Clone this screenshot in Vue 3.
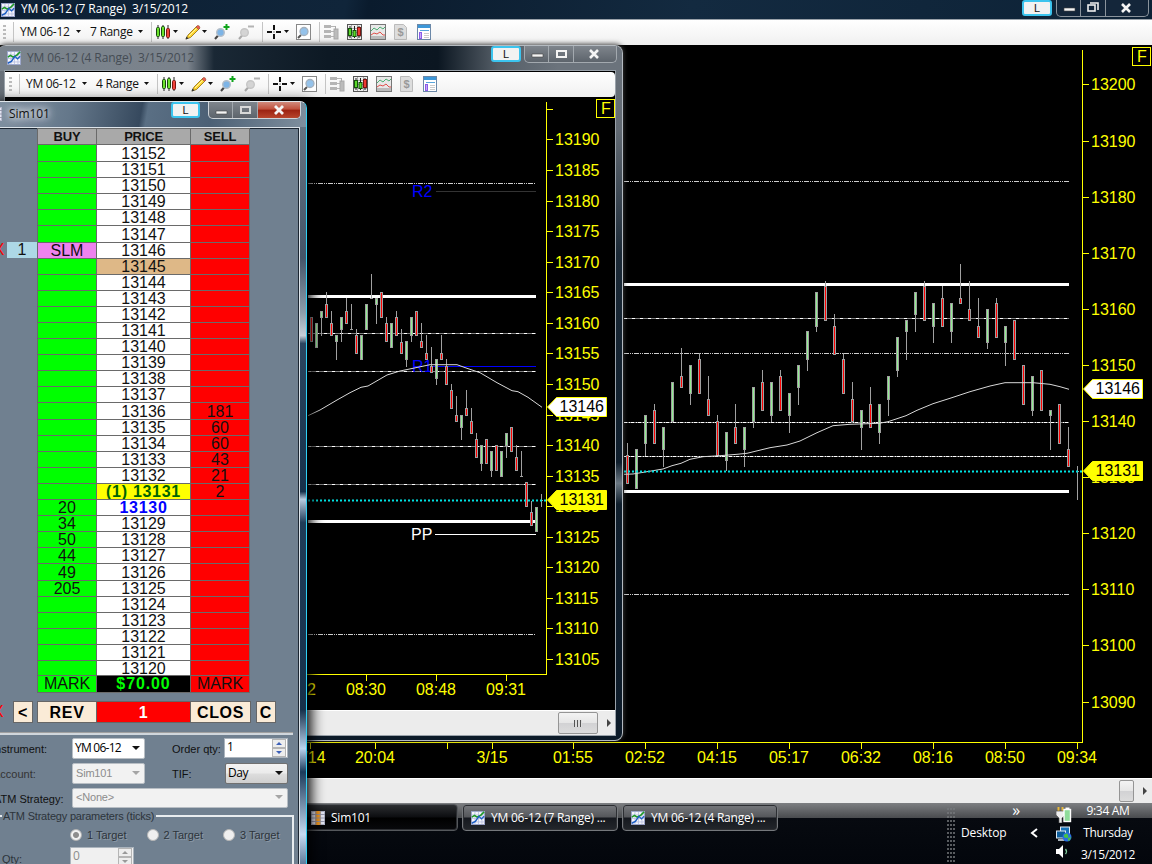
<script setup>
import { reactive } from 'vue';

const tools = ['candles', 'pencil', 'zoomin', 'zoomout', 'cross', 'page', 'trader', 'boxcandles', 'lines', 'dollar', 'panel']
const dropTools = ['candles', 'pencil', 'cross']
const sepBefore = ['candles', 'cross', 'trader']

// bar: [kind, high, body top, body bottom, low]
const bars7 = [
  ['r', 443, 455, 484, 484], ['g', 449, 449, 489, 489], ['g', 415, 415, 444, 456], ['r', 404, 410, 444, 444],
  ['g', 427, 427, 450, 467], ['g', 382, 382, 422, 422], ['r', 348, 376, 388, 388], ['g', 365, 365, 394, 405],
  ['r', 353, 359, 394, 394], ['r', 376, 399, 416, 416], ['r', 415, 421, 456, 456], ['g', 432, 432, 461, 471],
  ['r', 404, 427, 444, 444], ['g', 427, 427, 450, 467], ['g', 387, 387, 422, 428], ['r', 370, 382, 411, 411],
  ['g', 382, 382, 416, 422], ['r', 370, 376, 411, 411], ['g', 393, 393, 416, 433], ['g', 365, 365, 388, 405],
  ['g', 331, 331, 360, 371], ['g', 292, 292, 327, 332], ['r', 281, 286, 321, 321], ['r', 314, 326, 355, 355],
  ['r', 353, 359, 394, 394], ['r', 382, 399, 422, 422], ['g', 410, 410, 428, 450], ['r', 387, 404, 428, 428],
  ['g', 404, 404, 433, 444], ['g', 376, 376, 400, 416], ['g', 337, 337, 371, 377], ['g', 320, 320, 332, 360],
  ['g', 292, 292, 315, 332], ['r', 281, 286, 321, 321], ['g', 303, 303, 327, 343], ['r', 286, 298, 327, 327],
  ['g', 303, 303, 332, 343], ['r', 264, 298, 304, 304], ['r', 281, 309, 321, 321], ['r', 298, 326, 338, 338],
  ['g', 309, 309, 343, 349], ['r', 298, 303, 338, 338], ['g', 326, 326, 343, 366], ['r', 320, 320, 360, 360],
  ['r', 365, 365, 405, 405], ['g', 376, 376, 411, 416], ['r', 370, 370, 411, 411], ['g', 410, 410, 416, 450],
  ['r', 404, 404, 444, 444], ['r', 427, 449, 467, 467], ['d', 466, 471, 472, 500]
]

const bars4 = [
  ['r', 317, 317, 342, 342], ['g', 323, 323, 348, 348], ['g', 311, 311, 318, 336], ['r', 292, 304, 318, 318],
  ['r', 311, 323, 336, 336], ['g', 335, 335, 342, 360], ['g', 317, 317, 330, 342], ['r', 298, 311, 324, 324],
  ['d', 304, 329, 330, 330], ['r', 329, 335, 354, 354], ['g', 335, 335, 360, 360], ['g', 304, 304, 330, 330],
  ['d', 274, 298, 299, 299], ['g', 298, 298, 305, 324], ['r', 292, 292, 318, 318], ['r', 317, 323, 342, 342],
  ['g', 323, 323, 348, 348], ['r', 311, 317, 336, 336], ['r', 329, 342, 354, 354], ['g', 341, 341, 360, 367],
  ['g', 317, 317, 336, 342], ['r', 311, 311, 336, 336], ['r', 323, 341, 348, 348], ['r', 335, 353, 360, 360],
  ['r', 347, 366, 373, 373], ['g', 359, 359, 379, 385], ['r', 335, 353, 360, 360], ['r', 359, 366, 385, 385],
  ['r', 384, 390, 409, 409], ['r', 396, 415, 422, 422], ['g', 415, 415, 428, 440], ['r', 390, 408, 416, 416],
  ['r', 408, 421, 434, 434], ['r', 433, 439, 458, 458], ['g', 445, 445, 464, 471], ['r', 439, 439, 464, 464],
  ['g', 451, 451, 471, 477], ['r', 445, 445, 471, 471], ['g', 451, 451, 477, 477], ['g', 433, 433, 446, 458],
  ['r', 427, 427, 452, 452], ['r', 445, 457, 471, 471], ['d', 451, 476, 477, 477], ['r', 482, 482, 507, 507],
  ['r', 501, 512, 526, 526], ['g', 507, 507, 532, 532], ['d', 494, 500, 501, 507]
]

const charts = reactive([
  {
    id: 'main',
    title: 'YM 06-12 (7 Range)\u00a0 3/15/2012',
    range: '7 Range',
    viewBox: '0 45 1152 733',
    width: 1152,
    height: 733,
    left: 624,
    right: 1069,
    axisX: 1082,
    axisTop: 50,
    axisY: 742,
    labelX: 1091,
    flag: { x: 1132, y: 47 },
    prices: buildPrices(13200, 10, 12, 84.9, 5.61),
    times: [
      { x: 310, label: '3/14' }, { x: 375, label: '20:04' }, { x: 447, label: '' }, { x: 492, label: '3/15' },
      { x: 573, label: '01:55' }, { x: 645, label: '02:52' }, { x: 717, label: '04:15' }, { x: 789, label: '05:17' },
      { x: 861, label: '06:32' }, { x: 933, label: '08:16' }, { x: 1005, label: '08:50' }, { x: 1077, label: '09:34' }
    ],
    timeY: 763,
    levels: [
      { y: 181, kind: 'dots' }, { y: 318, kind: 'dash' }, { y: 353, kind: 'dots' },
      { y: 422, kind: 'mix' }, { y: 456, kind: 'mix' }, { y: 594, kind: 'dots' }
    ],
    bands: [283, 490],
    last: 471,
    average: '624,474.3 633,474 647,471.7 663,469 672,465.7 681,463.3 690,459.3 703,456.7 720,455.7 737,454.3 747,453.3 770,447.7 787,445 800,441 817,432.7 833,425.7 850,424.3 879,423.3 888,421.7 906,415.7 917,410.3 933,403.7 950,398.3 970,391.7 990,386 1005,382.7 1033,382.7 1050,384.3 1060,386.7 1069,389.3',
    bars: buildBars(bars7, 626, 9),
    tags: [{ y: 389, value: 13146, kind: 'white' }, { y: 471, value: 13131, kind: 'yellow' }]
  },
  {
    id: 'second',
    title: 'YM 06-12 (4 Range)\u00a0 3/15/2012',
    range: '4 Range',
    viewBox: '5 97 611 613',
    width: 611,
    height: 613,
    left: 308,
    right: 536,
    axisX: 546,
    axisTop: 102,
    axisY: 674,
    labelX: 555,
    flag: { x: 596, y: 99 },
    prices: buildPrices(13195, 5, 19, 109.3, 6.114),
    times: [
      { x: 296, label: '08:12' }, { x: 366, label: '08:30' }, { x: 436, label: '08:48' }, { x: 506, label: '09:31' }
    ],
    timeY: 695,
    levels: [
      { y: 183, kind: 'dots' }, { y: 333, kind: 'dash' }, { y: 371, kind: 'dash' },
      { y: 446, kind: 'dash' }, { y: 484, kind: 'dash' }, { y: 634, kind: 'dots' }
    ],
    bands: [295, 520],
    last: 500,
    average: '308,415.7 320,410 337,400 350,392.7 361,387.3 368,386 387,375 400,371 413,368.3 430,364.7 457,364.7 467,368.3 480,372.7 497,382.7 512,390.7 518,391.7 528,397.3 542,407.3',
    bars: buildBars(bars4, 310, 5),
    tags: [{ y: 407, value: 13146, kind: 'white' }, { y: 500, value: 13131, kind: 'yellow' }]
  }
])

const asks = { 13136: 181, 13135: 60, 13134: 60, 13133: 43, 13132: 21, 13131: 2 }
const bids = { 13130: 20, 13129: 34, 13128: 50, 13127: 44, 13126: 49, 13125: 205 }
const tallRows = [13152, 13147, 13136, 13126]
const rows = buildLadder()

const taskButtons = [
  { label: 'Sim101', icon: 'ladder', active: true },
  { label: 'YM 06-12 (7 Range) ...', icon: 'chart' },
  { label: 'YM 06-12 (4 Range) ...', icon: 'chart' }
]

function buildPrices(top, step, count, y, scale) {
  const list = []
  for (let i = 0; i < count; i++) {
    // first line of the small chart has a tick only
    const label = top === 13195 && i === 0 ? '' : top - i * step
    list.push({ label, y: Math.floor(y + i * step * scale) })
  }
  return list
}

function buildBars(source, x, pitch) {
  return source.map(([kind, high, top, bottom, low], i) => ({ kind, high, top, bottom, low, x: x + i * pitch }))
}

function buildLadder() {
  const list = []
  for (let price = 13152; price >= 13120; price--) {
    list.push({
      price,
      bid: price === 13146 ? 'SLM' : bids[price],
      ask: asks[price],
      text: price === 13131 ? '(1) 13131' : price,
      order: price === 13146
    })
  }
  return list
}
</script>

<template>
  <div class="desktop">
    <svg class="defs" width="0" height="0">
      <symbol id="chart" viewBox="0 0 16 16">
        <rect x="0.5" y="0.5" width="15" height="15" fill="#f4f6fc" stroke="#9aa4cc" />
        <path d="M4.5 1v14M8.5 1v14M12.5 1v14M1 4.5h14M1 8.5h14M1 12.5h14" stroke="#b9c0e0" />
        <path d="M1 7l3-2 3 2 4-2 4-4" fill="none" stroke="#1d9a26" stroke-width="1.8" />
        <path d="M1 14l4-2 4-6 3 3 3-3" fill="none" stroke="#1c5fc4" stroke-width="1.6" />
      </symbol>
      <symbol id="ladder" viewBox="0 0 16 16">
        <rect x="0.5" y="0.5" width="15" height="15" fill="#e4e6f4" stroke="#b6b8cc" />
        <path d="M5 0h6v16H5z" fill="#f59a1d" />
        <path d="M0 4h16M0 8h16M0 12h16M5.5 0v16M10.5 0v16" stroke="#8f90a4" />
      </symbol>
      <symbol id="candles" viewBox="0 0 14 16">
        <path d="M2 1v14M7 1v14M12 1v14" stroke="#222" />
        <rect x="0.5" y="3.5" width="3" height="9" rx="1" fill="#6be32c" stroke="#174a0d" />
        <rect x="5.5" y="2.5" width="3" height="10" rx="1" fill="#6be32c" stroke="#174a0d" />
        <rect x="10.5" y="4.5" width="3" height="9" rx="1" fill="#f0443a" stroke="#7c1511" />
      </symbol>
      <symbol id="pencil" viewBox="0 0 16 16">
        <path d="M1 15l2-4 9-9 2.500 2.500-9 9z" fill="#ffd62e" stroke="#8a6a10" stroke-width=".8" />
        <path d="M11 3l1.500-1.500q2-.5 2.500 2.500l-1.500 1.500z" fill="#ef5a4c" stroke="#9a5a40" stroke-width=".7" />
        <path d="M0.500 15.500l1-3 2 2z" fill="#333" />
        <path d="M4 12l7.500-7.500" stroke="#fff3a5" />
      </symbol>
      <symbol id="zoomin" viewBox="0 0 16 16">
        <path d="M4.500 11l-3.500 4" stroke="#444" stroke-width="2" />
        <circle cx="6.5" cy="8.500" r="3.800" fill="#7db4e6" stroke="#b4bec8" stroke-width="1.4" />
        <path d="M12.500 0v6M9.500 3h6" stroke="#10a51c" stroke-width="2" />
      </symbol>
      <symbol id="zoomout" viewBox="0 0 16 16">
        <path d="M4.500 11l-3.500 4" stroke="#aaa" stroke-width="2" />
        <circle cx="6.500" cy="8.500" r="3.800" fill="#d4d4d4" stroke="#c6c6c6" stroke-width="1.4" />
        <path d="M10 2.500h6" stroke="#b4b4b4" stroke-width="2" />
      </symbol>
      <symbol id="cross" viewBox="0 0 14 16">
        <path d="M7 1v5M7 10v5M0 8h5M9 8h5" stroke="#111" stroke-width="2" />
        <path d="M6.500 7.500h1v1h-1z" fill="#111" />
      </symbol>
      <symbol id="page" viewBox="0 0 15 16">
        <rect x="0.500" y="0.500" width="14" height="15" fill="#fff" stroke="#888" />
        <path d="M5 11l-3 3" stroke="#555" stroke-width="2" />
        <circle cx="8" cy="7.500" r="4" fill="#94c2ea" stroke="#a4b0bc" stroke-width="1.3" />
      </symbol>
      <symbol id="trader" viewBox="0 0 16 16">
        <path d="M0 1h7v3H0zM0 6h7v3H0zM0 11h7v3H0z" fill="#b5b5b5" />
        <path d="M7 2.500h4M7 7.500h3M7 12.500h4" stroke="#b5b5b5" />
        <rect x="10" y="5" width="4" height="10" fill="#bbb" stroke="#aaa" />
        <path d="M11.500 2v4" stroke="#aaa" />
      </symbol>
      <symbol id="boxcandles" viewBox="0 0 15 16">
        <rect x="0.500" y="0.500" width="14" height="15" fill="#eee" stroke="#555" />
        <path d="M1 4.500h13M1 8.500h13M1 12.500h13M4.500 1v14M10.500 1v14" stroke="#aaa" />
        <path d="M3 2v12M7.500 2v12M12 2v12" stroke="#222" />
        <rect x="1.500" y="4.500" width="3" height="7" fill="#5ad82a" stroke="#14520b" />
        <rect x="6" y="6.500" width="3" height="6" fill="#5ad82a" stroke="#14520b" />
        <rect x="10.500" y="3.500" width="3" height="8" fill="#ee3a32" stroke="#7c1511" />
      </symbol>
      <symbol id="lines" viewBox="0 0 16 16">
        <rect x="0.500" y="0.500" width="15" height="15" fill="#e8e8e8" stroke="#777" />
        <path d="M1 12h14v3H1z" fill="#bbb" />
        <path d="M1 7l3-3 3 2 3-3 3 2 2-2" fill="none" stroke="#4fae73" />
        <path d="M1 11l3-2 3 1 3-2 3 3 2 0" fill="none" stroke="#e0504a" />
      </symbol>
      <symbol id="dollar" viewBox="0 0 13 16">
        <path d="M0.500 0.500h9l3 3v12h-12z" fill="#ddd" stroke="#bbb" />
        <text x="6.500" y="12" text-anchor="middle" font-family="Liberation Sans, sans-serif" font-size="11" font-weight="bold" fill="#999">$</text>
      </symbol>
      <symbol id="panel" viewBox="0 0 14 16">
        <rect x="0.500" y="0.500" width="13" height="15" fill="#fff" stroke="#6b88a8" />
        <path d="M1 1h12v3H1z" fill="#3d97d8" />
        <path d="M3 6.500h9" stroke="#58a5dc" />
        <rect x="2.500" y="8.500" width="2" height="6" fill="#c6a6f5" stroke="#8a5ce8" />
        <path d="M7 9.500h5M7 11.500h5M7 13.500h5" stroke="#ccc" />
      </symbol>
    </svg>

    <div v-for="chart in charts" :key="chart.id" class="window" :class="chart.id">
      <div class="titlebar">
        <svg class="app-icon"><use href="#chart" /></svg>
        <span class="title">{{ chart.title }}</span>
        <span class="link-button">L</span>
        <div class="controls">
          <svg width="24" height="16"><path d="M7 8h11v3H7z" fill="#f4f4f4" stroke="#444" stroke-width=".6" /></svg>
          <svg width="25" height="16">
            <g v-if="chart.id === 'main'" fill="none" stroke="#eee" stroke-width="1.6">
              <path d="M9 3h8v7" /><rect x="7" y="5" width="7" height="6" />
            </g>
            <rect v-else x="8" y="5" width="9" height="6" fill="none" stroke="#f4f4f4" stroke-width="2" />
          </svg>
          <svg class="last" width="42" height="16"><path d="M16 4l8 8M24 4l-8 8" stroke="#f4f4f4" stroke-width="2.6" /></svg>
        </div>
      </div>
      <div class="content">
        <div class="toolbar">
          <span class="grip"></span>
          <span class="sep first"></span>
          <span class="tool-text">YM 06-12</span>
          <span class="arrow wide"></span>
          <span class="tool-text range">{{ chart.range }}</span>
          <span class="arrow wide"></span>
          <template v-for="tool in tools" :key="tool">
            <span v-if="sepBefore.includes(tool)" class="sep"></span>
            <svg class="tool" :class="tool"><use :href="'#' + tool" /></svg>
            <span v-if="dropTools.includes(tool)" class="arrow"></span>
          </template>
        </div>
        <svg class="plot" :width="chart.width" :height="chart.height" :viewBox="chart.viewBox">
          <g class="crisp">
            <g v-for="level in chart.levels" :key="level.y">
              <line v-if="level.kind !== 'dots'" :x1="chart.left" :x2="chart.right" :y1="level.y + .5" :y2="level.y + .5" class="level-base" />
              <line :x1="chart.left" :x2="chart.right" :y1="level.y + .5" :y2="level.y + .5" class="level" :class="level.kind" />
            </g>
            <rect v-for="y in chart.bands" :key="y" :x="chart.left" :y="y" :width="chart.right - chart.left" height="3" fill="#fff" />
          </g>
          <g v-if="chart.id === 'second'">
            <path class="pivot dim" d="M436 191.500H536" />
            <path class="pivot blue" d="M430 366.500H536" />
            <path class="pivot" d="M435 534.500H536" />
            <text x="412" y="197" class="blue">R2</text>
            <text x="412" y="372" class="blue">R1</text>
            <text x="411" y="540" class="pp">PP</text>
          </g>
          <g class="crisp">
            <g v-for="bar in chart.bars" :key="bar.x" :class="bar.kind">
              <rect :x="bar.x + 1" :y="bar.high" width="1" :height="bar.low - bar.high" fill="#a0a0a0" />
              <rect :x="bar.x" :y="bar.top" width="3" :height="bar.bottom - bar.top" fill="#a0a0a0" />
              <rect v-if="bar.kind !== 'd'" class="body" :x="bar.x + 1" :y="bar.top + 1" width="1" :height="bar.bottom - bar.top - 2" />
            </g>
          </g>
          <polyline class="average" :points="chart.average" />
          <path class="last-line" :d="`M${chart.left} ${chart.last + .5}H${chart.axisX}`" />
          <path class="axis" :d="`M${chart.axisX + .5} ${chart.axisTop}V${chart.axisY + .5}H0`" />
          <g v-for="price in chart.prices" :key="price.y">
            <path class="axis" :d="`M${chart.axisX} ${price.y + .5}h7`" />
            <text :x="chart.labelX" :y="price.y + 6">{{ price.label }}</text>
          </g>
          <g v-for="time in chart.times" :key="time.x">
            <path class="axis" :d="`M${time.x + .5} ${chart.axisY}v7`" />
            <text :x="time.x" :y="chart.timeY" text-anchor="middle">{{ time.label }}</text>
          </g>
          <g v-for="tag in chart.tags" :key="tag.value" :class="'tag-' + tag.kind">
            <path :d="`M${chart.axisX + 1.500} ${tag.y}l9-9.500h50v19h-50z`" />
            <text :x="chart.axisX + 13.500" :y="tag.y + 5">{{ tag.value }}</text>
          </g>
          <rect class="flag" :x="chart.flag.x + .5" :y="chart.flag.y + .5" width="18" height="18" />
          <text :x="chart.flag.x + 5" :y="chart.flag.y + 15">F</text>
        </svg>
        <div class="scrollbar">
          <span class="thumb"><i v-if="chart.id === 'second'"></i></span>
          <svg width="5" height="8"><path d="M1 0l4 4-4 4z" fill="#444" /></svg>
        </div>
      </div>
    </div>

    <div class="taskbar">
      <div class="tasks">
        <div v-for="task in taskButtons" :key="task.label" class="task" :class="{ active: task.active }">
          <svg class="app-icon"><use :href="'#' + task.icon" /></svg>
          <span>{{ task.label }}</span>
        </div>
      </div>
      <div class="tray-grip"></div>
      <div class="toolbar-desktop">
        <span class="more">»</span>
        <span>Desktop</span>
      </div>
      <svg class="chevron" width="8" height="10"><path d="M7 1L2 5l5 4" fill="none" stroke="#fff" stroke-width="2" /></svg>
      <div class="tray-icons">
        <svg width="16" height="16">
          <path d="M2.500 0v4M6.500 0v4" stroke="#e8b83a" stroke-width="2" />
          <path d="M0 4h9v4l-3 3v5H3v-5L0 8z" fill="#eee" stroke="#555" stroke-width=".7" />
          <rect x="8" y="2.500" width="6.500" height="12" fill="#8fdc9a" stroke="#fff" stroke-width="1.4" />
          <path d="M9.500 0.500h4v2h-4z" fill="#fff" />
        </svg>
        <svg width="16" height="16">
          <rect x="4.500" y="1" width="9" height="8" fill="#1673b8" stroke="#dfeaf2" />
          <rect x="0.500" y="5" width="9" height="7" fill="#0d5e9e" stroke="#dfeaf2" />
          <path d="M2 14h6" stroke="#dfeaf2" stroke-width="1.500" />
          <circle cx="11" cy="11" r="4.500" fill="#2a6fe0" />
          <path d="M8 9q3-3 4 0t-1 3-3-1zM12 12l3-1-1 3-2 1z" fill="#45c445" />
        </svg>
        <svg width="16" height="16">
          <path d="M0 4h3l4-4v13l-4-4H0z" fill="#fff" />
          <path d="M9.500 4q2 2.500 0 5" fill="none" stroke="#7fc99a" stroke-width="1.300" />
        </svg>
      </div>
      <div class="clock">
        <span>9:34 AM</span>
        <span>Thursday</span>
        <span>3/15/2012</span>
      </div>
    </div>

    <div class="window sim">
      <div class="titlebar">
        <svg class="app-icon"><use href="#ladder" /></svg>
        <span class="title">Sim101</span>
        <span class="link-button">L</span>
        <div class="controls">
          <svg width="24" height="16"><path d="M7 9h11v3H7z" fill="#f4f4f4" stroke="#444" stroke-width=".6" /></svg>
          <svg width="25" height="16"><rect x="8" y="5" width="9" height="6" fill="none" stroke="#d8d8d8" stroke-width="2" /></svg>
          <svg class="last close" width="42" height="16"><path d="M17 4l8 8M25 4l-8 8" stroke="#f4f4f4" stroke-width="2.800" /></svg>
        </div>
      </div>
      <div class="sim-body">
        <div class="row head">
          <span class="cancel"></span><span class="qty"></span>
          <span class="cell">BUY</span><span class="cell">PRICE</span><span class="cell end">SELL</span>
        </div>
        <div v-for="row in rows" :key="row.price" class="row"
          :class="{ tall: tallRows.includes(row.price), short: row.price === 13120 }">
          <span class="cancel"><b v-if="row.order">X</b></span>
          <span class="qty" :class="{ working: row.order }">{{ row.order ? 1 : '' }}</span>
          <span class="cell buy" :class="{ order: row.order }">{{ row.bid }}</span>
          <span class="cell price" :class="'p' + row.price">{{ row.text }}</span>
          <span class="cell sell end">{{ row.ask }}</span>
        </div>
        <div class="row foot">
          <span class="cancel"></span><span class="qty"></span>
          <span class="cell buy">MARK</span><span class="cell pnl">$70.00</span><span class="cell sell end">MARK</span>
        </div>
        <div class="actions">
          <span class="cancel"><b>X</b></span>
          <span class="action small">&lt;</span>
          <div class="group">
            <span class="action rev">REV</span><span class="action pos">1</span><span class="action clos">CLOS</span>
          </div>
          <span class="action small">C</span>
        </div>
        <div class="divider"></div>
        <div class="form">
          <label class="l1">Instrument:</label>
          <div class="combo white">YM 06-12<i class="arrow"></i></div>
          <label>Order qty:</label>
          <div class="spinner">1<span class="updown"><i class="up"></i><i class="down"></i></span></div>
          <label class="l2">Account:</label>
          <div class="combo off">Sim101<i class="arrow"></i></div>
          <label>TIF:</label>
          <div class="combo button">Day<i class="arrow"></i></div>
          <label class="l3">ATM Strategy:</label>
          <div class="combo off wide">&lt;None&gt;<i class="arrow"></i></div>
        </div>
        <div class="params">
          <div class="legend"><span>ATM Strategy parameters (ticks)</span></div>
          <div class="radios">
            <span v-for="n in 3" :key="n" class="radio"><i :class="{ on: n === 1 }"></i>{{ n }} Target</span>
          </div>
          <div class="qty-line">
            <label>Qty:</label>
            <div class="spinner off">0<span class="updown"><i class="up"></i><i class="down"></i></span></div>
          </div>
        </div>
      </div>
    </div>
  </div>
</template>

<style>
body {
  background: #000;
  overflow: hidden;
}
</style>

<style scoped>
.desktop {
  position: relative;
  width: 1152px;
  height: 864px;
  overflow: hidden;
  background: #000;
  font: 12px/16px 'Open Sans', 'Noto Sans', sans-serif;
  letter-spacing: -0.1px;
}

.desktop *,
.desktop {
  box-sizing: border-box;
}

.defs {
  position: absolute;
}

svg {
  display: block;
  flex: none;
}

/* windows */
.window {
  position: absolute;
}

.titlebar {
  display: flex;
  align-items: flex-start;
  white-space: pre;
}

.app-icon {
  width: 14px;
  height: 14px;
}

.title {
  flex: 1;
}

.link-button {
  width: 30px;
  height: 16px;
  border: 2px solid #3cc4ee;
  border-radius: 3px;
  background: #f2f2f2;
  color: #111;
  font: 11px/12px 'Liberation Sans', sans-serif;
  text-align: center;
}

.controls {
  display: flex;
  margin-left: 3px;
  border: 1px solid #a3a9af;
  border-top: 0;
  border-radius: 0 0 5px 5px;
  overflow: hidden;
  background: linear-gradient(#7f858c, #5d646c);
}

.controls svg {
  border-right: 1px solid #a3a9af;
}

.controls svg.last {
  border-right: 0;
}

.main {
  left: 0;
  top: 0;
  width: 1152px;
  height: 803px;
}

.main .titlebar {
  height: 20px;
  padding: 0 3px 0 1px;
  background: linear-gradient(100deg, #0c1f33 0%, #10253a 30%, #0a1b2d 32%, #132a40 60%, #0d2236 100%);
  border-bottom: 1px solid #9aa2aa;
  color: #fff;
}

.main .app-icon {
  margin-top: 3px;
}

.main .title {
  margin: 1px 0 0 6px;
}

.main .controls {
  margin-left: 4px;
  background: #14263a;
  border-color: #8a939c;
}

.main .controls svg {
  border-color: #8a939c;
}

.second {
  left: -2px;
  top: 45px;
  width: 625px;
  height: 696px;
  padding: 0 7px 6px;
  border: 1px solid #b4bac0;
  border-left: 0;
  border-radius: 8px;
  background: linear-gradient(#6c747d 0%, #626a73 12%, #1b2936 30%, #0f1e2c 60%, #6a7782 63%, #0f1e2c 66%, #0d1b29 100%);
  box-shadow: 0 -1px 5px #444;
}

.second .titlebar {
  height: 25px;
  margin: 0 -7px;
  padding: 0 5px 0 9px;
  border-radius: 7px 7px 0 0;
  background: linear-gradient(90deg, #7b848d 0, #7a828b 190px, #1a2835 216px, #0d1924 330px, #0b1621 440px, #555e67 500px, #6b737c 560px);
  color: #454c54;
}

.second .app-icon {
  margin-top: 5px;
}

.second .title {
  margin: 4px 0 0 6px;
}

.second .content {
  border-top: 1px solid #000;
  outline: 1px solid #9aa2aa;
}

.content {
  background: #000;
}

/* toolbar */
.toolbar {
  display: flex;
  align-items: center;
  height: 25px;
  padding: 0 0 2px 3px;
  background: linear-gradient(#fff, #f0f0f0);
  color: #111;
  letter-spacing: -0.3px;
  white-space: nowrap;
}

.second .toolbar {
  padding-left: 4px;
  border-radius: 0 4px 4px 0;
}

.grip {
  width: 3px;
  height: 14px;
  background: repeating-linear-gradient(#bbb 0 2px, transparent 2px 4px);
}

.sep {
  width: 1px;
  height: 20px;
  margin: 0 4px 0 8px;
  background: #c4c4c4;
}

.sep.first {
  margin: 0 6px 0 7px;
}

.tool-text {
  width: 51px;
}

.tool-text.range {
  width: 43px;
  margin-left: 9px;
}

.arrow {
  width: 5px;
  margin-left: 3px;
  border: solid transparent;
  border-width: 3px 2.5px 0;
  border-top-color: #111;
}

/* borders snap to whole pixels, so the toolbar arrows are clipped shapes */
.toolbar .arrow {
  height: 3px;
  border: 0;
  background: #111;
  clip-path: polygon(0 0, 100% 0, 50% 100%);
}

.arrow.wide {
  margin-left: 5px;
}

.tool {
  width: 16px;
  height: 16px;
}

.candles,
.cross {
  width: 14px;
}

.pencil,
.page,
.zoomin {
  margin-left: 7px;
}

.zoomout {
  margin-left: 8px;
}

.pencil + .arrow {
  margin-left: 1px;
}

.page,
.boxcandles {
  width: 15px;
}

.boxcandles {
  margin-left: 7px;
}

.lines,
.dollar {
  margin-left: 8px;
}

.dollar {
  width: 13px;
}

.panel {
  width: 14px;
  margin-left: 10px;
}

/* plot */
.plot {
  background: #000;
}

.plot text {
  font: 16px 'Liberation Sans', Arial, sans-serif;
  letter-spacing: 0;
  fill: #ff0;
}

.crisp,
.axis,
.pivot,
.flag {
  shape-rendering: crispEdges;
}

.level-base {
  stroke: #808080;
}

.level {
  stroke: #fff;
}

.level.dots {
  stroke-dasharray: 5 1 1 1 1 1;
  stroke: #d0d0d0;
}

.level.dash {
  stroke-dasharray: 3 5;
}

.level.mix {
  stroke-dasharray: 3 2 1 1;
}

.r .body {
  fill: #f00;
}

.g .body {
  fill: #90ee90;
}

.average {
  fill: none;
  stroke: #d8d8d8;
}

.last-line {
  stroke: #00e4e4;
  stroke-width: 2;
  stroke-dasharray: 2 2;
}

.axis {
  fill: none;
  stroke: #ff0;
}

.pivot {
  stroke: #fff;
}

.pivot.dim {
  stroke: #333;
}

.pivot.blue {
  stroke: #00f;
  stroke-width: 1.5;
}

.plot text.blue {
  fill: #00f;
}

.plot text.pp {
  fill: #fff;
}

.tag-white path {
  fill: #fff;
  stroke: #ff0;
}

.tag-yellow path {
  fill: #ff0;
  stroke: #ff0;
}

.plot .tag-white text,
.plot .tag-yellow text {
  fill: #000;
}

.flag {
  fill: none;
  stroke: #ff0;
}

/* scrollbar */
.scrollbar {
  display: flex;
  align-items: center;
  justify-content: flex-end;
  height: 25px;
  padding: 1px 5px 1px 0;
  gap: 8px;
  background: #ececec;
  border-top: 1px solid #fff;
}

.second .scrollbar {
  padding-right: 4px;
}

.thumb {
  display: flex;
  align-items: center;
  justify-content: center;
  width: 15px;
  height: 22px;
  border: 1px solid #959595;
  border-radius: 2px;
  background: linear-gradient(#f3f3f3, #e6e6e6 48%, #d2d2d4 52%, #dcdcdc);
}

.second .thumb {
  width: 40px;
}

.thumb i {
  width: 8px;
  height: 7px;
  background: repeating-linear-gradient(90deg, #555 0 1px, #ddd 1px 3px);
}

/* taskbar */
.taskbar {
  position: absolute;
  left: 0;
  top: 803px;
  display: flex;
  width: 1152px;
  height: 61px;
  background: linear-gradient(#7d7f82 0, #494b4e 15px, #070a10 15px, #03060c 100%);
  color: #fff;
}

.tasks {
  display: flex;
  gap: 4px;
  width: 947px;
  padding: 1px 0 0 302px;
}

.task {
  display: flex;
  align-items: center;
  gap: 6px;
  width: 156px;
  height: 27px;
  padding-left: 8px;
  border: 1px solid #75787c;
  border-radius: 4px;
  background: linear-gradient(#77797d 0, #55575b 12px, #16191f 13px, #23262b 100%);
  box-shadow: inset 0 0 0 1px #2c2e32;
  letter-spacing: -0.22px;
  white-space: nowrap;
}

.task.active {
  background: linear-gradient(#2c2e31, #0c0d10 12px, #000 13px, #08090c);
  border-color: #55585c;
}

.tray-grip {
  width: 8px;
  height: 55px;
  margin-top: 5px;
  background: radial-gradient(circle at 1px 1px, #777a7d 0.6px, transparent 1px) 0 0 / 3px 4px;
}

.toolbar-desktop {
  display: flex;
  flex-direction: column;
  width: 66px;
  padding-left: 6px;
  line-height: 22px;
}

.more {
  height: 19px;
  padding-right: 1px;
  font-size: 16px;
  line-height: 14px;
  text-align: right;
}

.chevron {
  margin: 25px 18px 0 9px;
}

.tray-icons {
  display: flex;
  flex-direction: column;
  gap: 3px;
  margin-top: 4px;
}

.clock {
  display: flex;
  flex-direction: column;
  flex: 1;
  margin: -3px 8px 0 0;
  line-height: 22px;
  text-align: center;
  letter-spacing: -0.3px;
}

/* order entry window */
.sim {
  left: -12px;
  top: 101px;
  width: 319px;
  height: 780px;
  padding-right: 6px;
  border-top: 1px solid #dfe5ea;
  border-right: 1px solid #2fd0f5;
  border-radius: 0 7px 0 0;
  background: linear-gradient(#6b7a88 0, #445468 20%, #8d9dab 27%, #c6d0d8 30%, #2b4660 31%, #16304a 50%, #b7cbe0 51%, #1f3c58 54%, #16304a 78%, #b9d2ef 83%, #1b3a5a 86%, #c5daf2 94%, #27476a 100%);
  box-shadow: 4px 2px 14px #000;
}

.sim .titlebar {
  height: 25px;
  margin-right: -6px;
  padding-right: 5px;
  border-radius: 0 6px 0 0;
  background: linear-gradient(100deg, #8394a4 0, #64778a 26%, #43566a 42%, #36495e 48%, #5a6f84 50%, #4c6075 70%, #7f8f9e 100%);
  color: #111;
}

.sim .app-icon {
  margin-top: 5px;
}

.sim .title {
  margin: 4px 0 0 7px;
  text-shadow: 0 0 6px #fff, 0 0 10px #fff, 0 0 14px #dde;
}

.sim .link-button {
  width: 29px;
}

.sim .controls {
  margin-left: 8px;
  border-color: #cfd4d9;
}

.close {
  background: linear-gradient(#d08a7c 0, #c0503c 45%, #9c2211 50%, #b8452c 100%);
}

.sim-body {
  height: 760px;
  padding-left: 12px;
  background: #708090;
  border-top: 1px solid #dde4ea;
  border-right: 1px solid #dde4ea;
  box-shadow: inset -1px 1px 0 #1c2632;
  overflow: hidden;
  font: 16px/16px 'Liberation Sans', Arial, sans-serif;
  letter-spacing: 0;
  color: #111;
}

.row {
  display: grid;
  grid-template-columns: 7px 30px 59px 94px 60px;
  height: 16px;
  text-align: center;
  white-space: nowrap;
}

.row.tall {
  height: 17px;
  line-height: 18px;
}

.row.short {
  height: 15px;
}

.row.foot {
  height: 18px;
}

.cell {
  border-top: 1px solid #6a6a6a;
  border-left: 1px solid #6a6a6a;
  overflow: hidden;
}

.cell.end {
  border-right: 1px solid #6a6a6a;
}

.head .cell {
  background: #a9a9a9;
  font-size: 13px;
  font-weight: bold;
  letter-spacing: -0.2px;
}

.foot .cell {
  border-bottom: 1px solid #6a6a6a;
}

.cancel {
  color: #f00;
}

.cancel b {
  display: block;
  margin-left: -7px;
  width: 12px;
  font-weight: normal;
}

.working {
  background: #add8e6;
}

.buy {
  background: #0f0;
}

.buy.order {
  background: #ee82ee;
}

.price {
  background: #fff;
}

.sell {
  background: #f00;
}

.p13145 {
  background: #deb887;
}

.p13131 {
  background: #ff0;
  color: #006400;
  font-weight: bold;
  letter-spacing: 0.7px;
}

.p13130 {
  color: #00f;
  font-weight: bold;
  letter-spacing: 0.7px;
}

.pnl {
  background: #000;
  color: #0f0;
  font-weight: bold;
  letter-spacing: 0.9px;
}

.actions {
  display: flex;
  height: 22px;
  margin-top: 8px;
  line-height: 21px;
}

.actions .cancel {
  width: 13px;
}

.action {
  height: 22px;
  border: 1px solid #666;
  background: #faebd7;
  color: #000;
  font-weight: bold;
  letter-spacing: 0.7px;
  text-align: center;
}

.action.small {
  width: 20px;
}

.group {
  display: flex;
  margin: 0 5px 0 4px;
}

.rev,
.pos {
  border-right: 0;
}

.action.rev {
  width: 59px;
}

.action.pos {
  width: 94px;
  background: #f00;
  color: #fff;
}

.action.clos {
  width: 61px;
}

.divider {
  width: 293px;
  height: 3px;
  margin-top: 9px;
  border-top: 1px solid #a0a0a0;
  border-bottom: 2px solid #d0d6dc;
}

.form {
  display: grid;
  grid-template-columns: 72px 100px 52px 64px;
  grid-template-rows: 21px 21px 21px;
  row-gap: 4px;
  margin-top: 3px;
  font-size: 11px;
  line-height: 23px;
}

.form label {
  white-space: nowrap;
}

.l1 {
  margin-left: -8px;
}

.l2 {
  margin-left: -7px;
  color: #333;
}

.l3 {
  margin-left: -6px;
}

.combo {
  display: flex;
  align-items: center;
  justify-content: space-between;
  width: 73px;
  height: 21px;
  padding: 0 4px 2px 2px;
  border: 1px solid #b8bec4;
  border-radius: 2px;
  font: 12px 'Open Sans', 'Noto Sans', sans-serif;
  letter-spacing: -0.75px;
  white-space: nowrap;
}

.combo .arrow {
  width: 8px;
  border-width: 4px;
  border-bottom: 0;
}

.combo.white {
  background: #fff;
  color: #000;
}

.combo.off {
  background: #f2f2f2;
  color: #8c8c8c;
  font: 11px 'Liberation Sans', sans-serif;
  letter-spacing: -0.2px;
  padding-left: 3px;
}

.combo.off .arrow {
  border-top-color: #a5a5a5;
}

.combo.button {
  border-color: #707070;
  background: linear-gradient(#f2f2f2, #ebebeb 48%, #ddd 52%, #cfcfcf);
  color: #000;
  letter-spacing: -0.4px;
  width: 63px;
  margin-left: 1px;
}

.combo.wide {
  width: 216px;
  height: 20px;
  grid-column: 2 / 5;
}

.spinner {
  display: flex;
  justify-content: space-between;
  width: 64px;
  height: 20px;
  padding-left: 2px;
  border: 1px solid #abb4bd;
  background: #fff;
  color: #000;
  font: 12px/16px 'Open Sans', 'Noto Sans', sans-serif;
}

.spinner.off {
  background: #f0f0f0;
  color: #8c8c8c;
}

.updown {
  display: flex;
  flex-direction: column;
  width: 14px;
  margin-right: 1px;
}

.updown i {
  display: flex;
  justify-content: center;
  align-items: center;
  height: 9px;
  border: 1px solid #b5b5b5;
  background: #ededed;
}

.updown i::after {
  content: '';
  border: 3px solid transparent;
  border-top: 0;
  border-bottom-color: #3b5fb8;
}

.updown .down::after {
  border-top: 3px solid #3b5fb8;
  border-bottom: 0;
}

.off .updown i::after {
  border-top-color: #999;
  border-bottom-color: #999;
}

.params {
  width: 294px;
  height: 80px;
  margin-top: 1px;
  font-size: 11px;
  color: #2d343b;
  background: linear-gradient(#e8ecef, #e8ecef) right 5px / 2px 100% no-repeat;
}

.legend {
  display: flex;
  align-items: center;
  height: 12px;
  line-height: 12px;
  letter-spacing: -0.2px;
  white-space: nowrap;
}

.legend::before,
.legend::after {
  content: '';
  width: 2px;
  height: 2px;
  background: #e8ecef;
}

.legend span {
  padding: 0 2px 0 1px;
}

.legend::after {
  flex: 1;
}

.radios {
  display: flex;
  padding: 5px 0 0 70px;
}

.radio {
  display: flex;
  flex: none;
  align-items: center;
  width: 76.5px;
  text-shadow: 1px 1px 0 #8d9aa7;
  white-space: nowrap;
}

.radio i {
  width: 12px;
  height: 12px;
  margin-right: 5px;
  border: 1px solid #b5b5b5;
  border-radius: 50%;
  background: #efefef;
}

.radio i.on {
  background: radial-gradient(circle, #8e8e8e 0 2.5px, #f2f2f2 3.5px);
}

.qty-line {
  display: flex;
  padding: 4px 0 0 2px;
  line-height: 24px;
}

.qty-line label {
  width: 68px;
}
</style>
